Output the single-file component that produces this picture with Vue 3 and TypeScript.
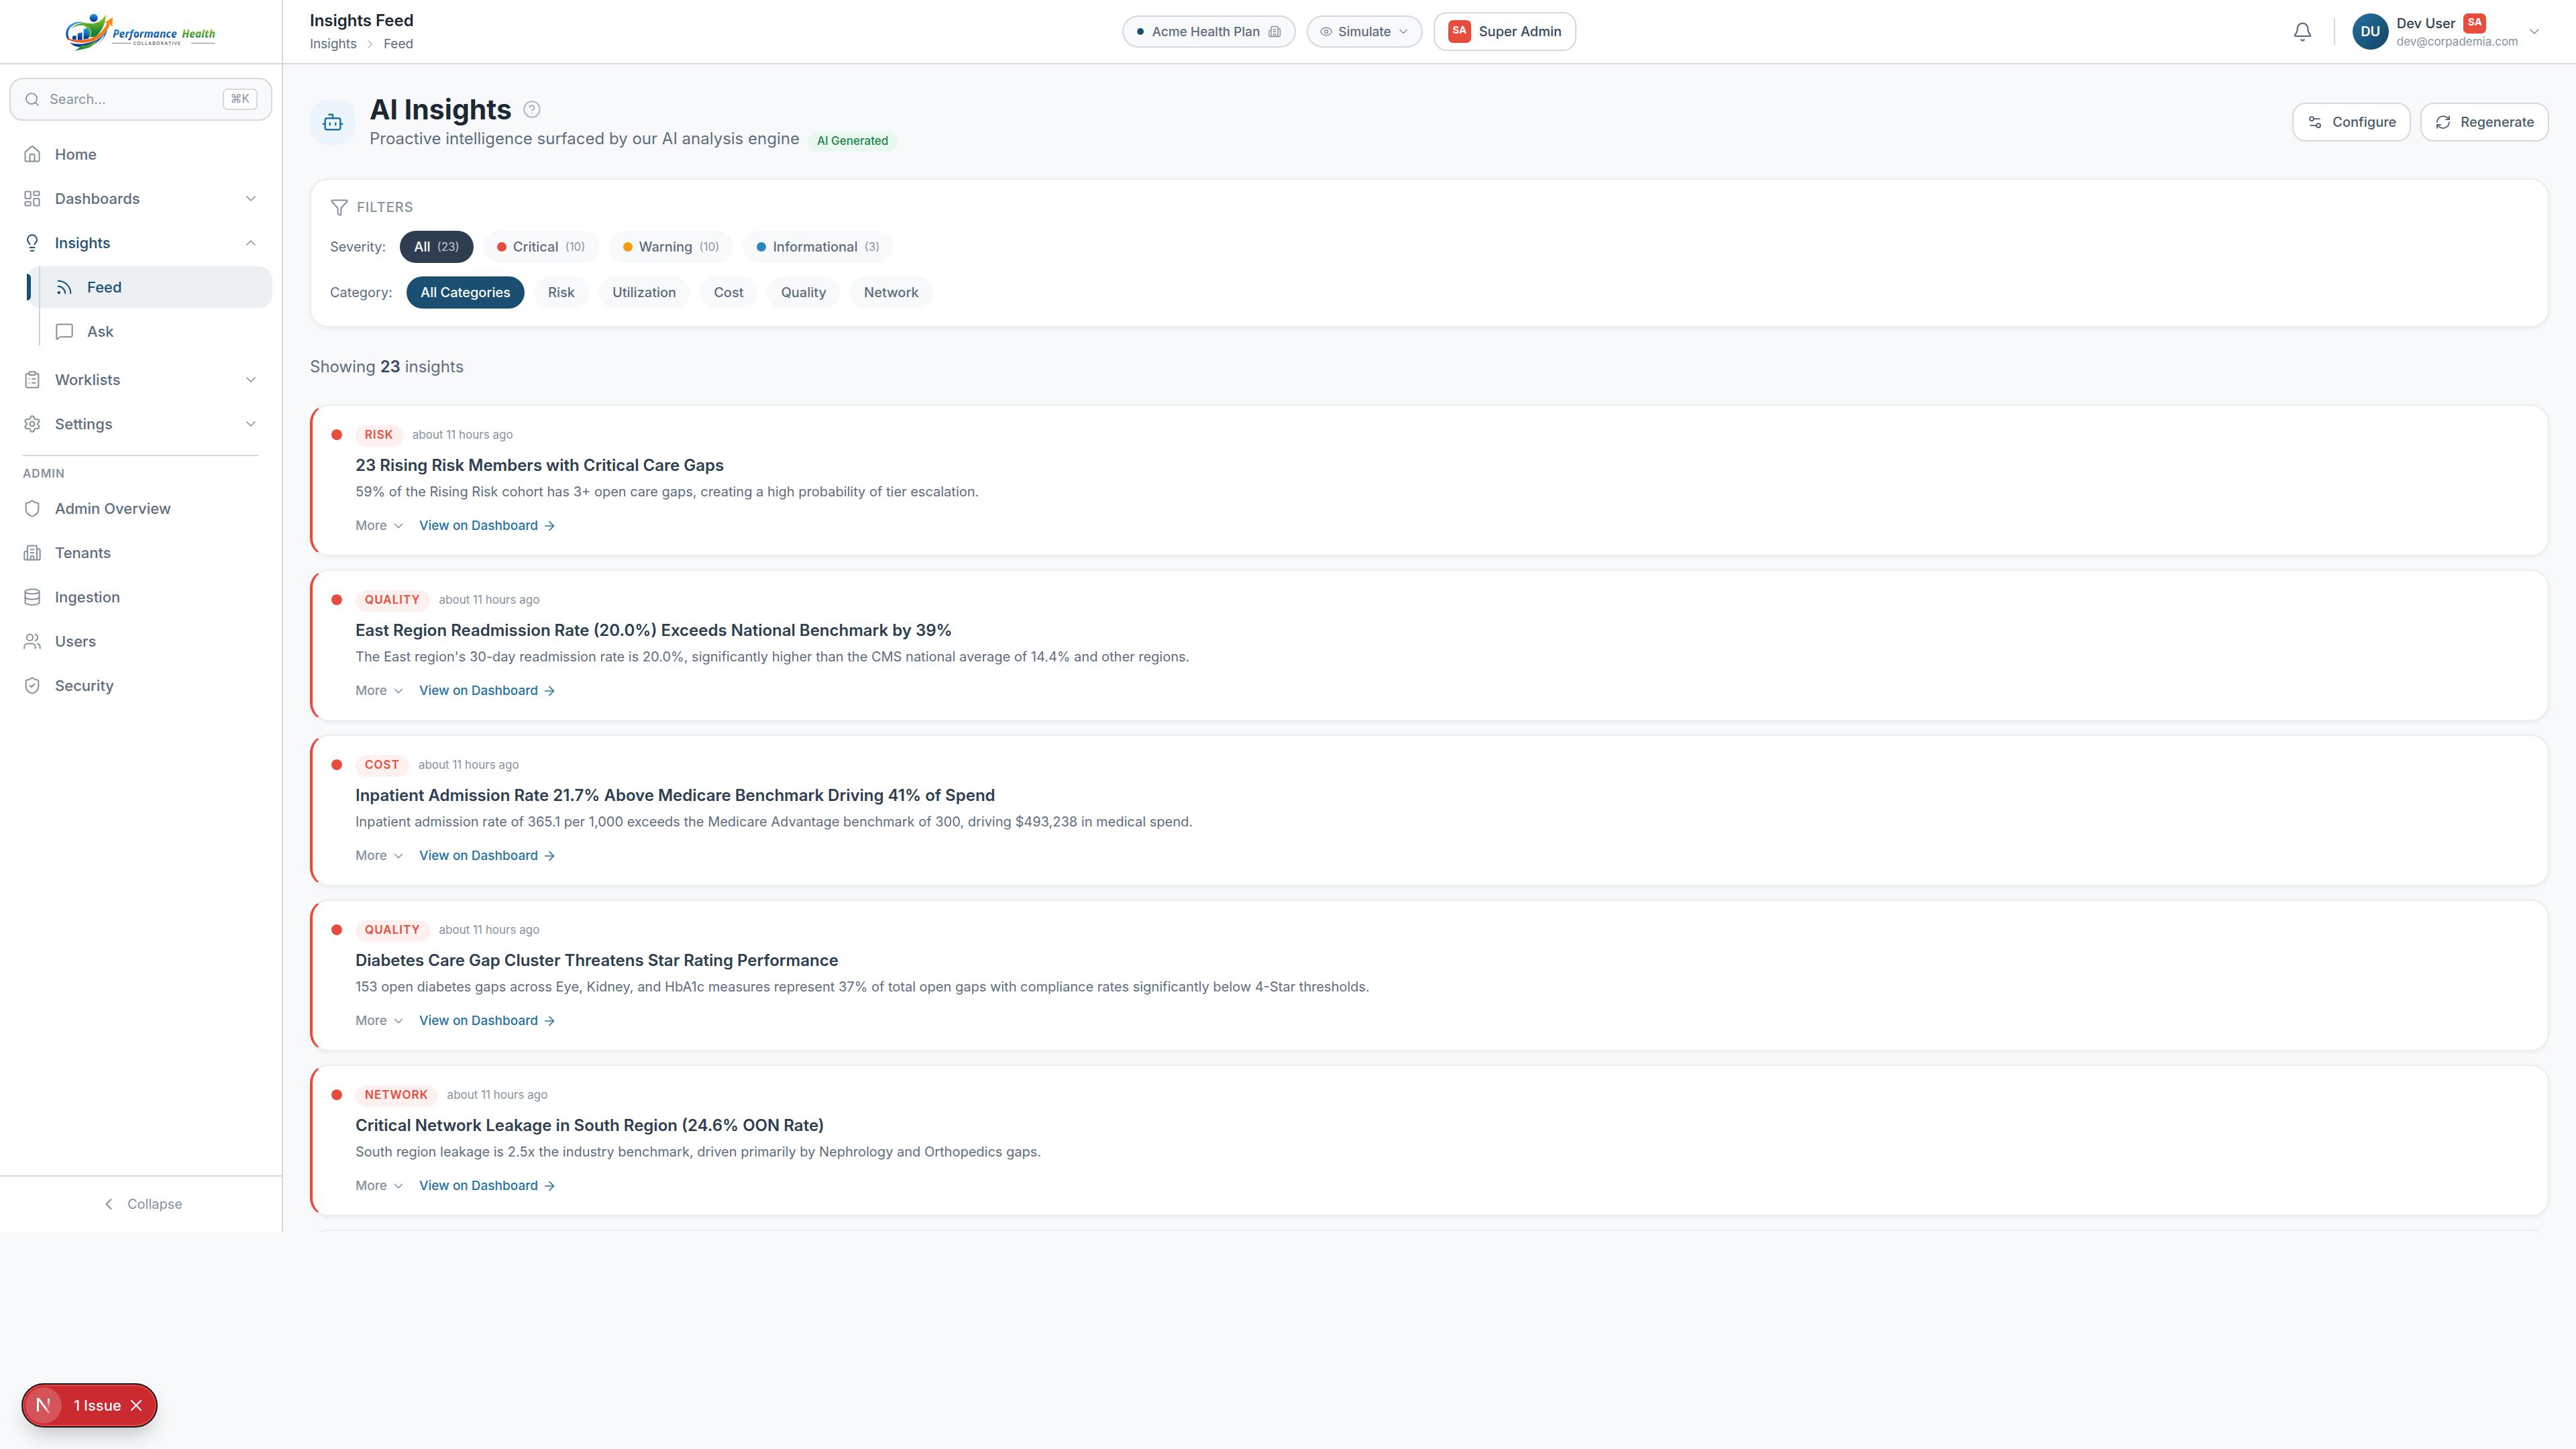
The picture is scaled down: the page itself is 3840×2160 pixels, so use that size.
<script setup lang="ts">
import { ref } from 'vue'

interface NavItem {
  label: string
  icon: string
  expandable?: boolean
  open?: boolean
  children?: { label: string; icon: string; active?: boolean }[]
}

interface Insight {
  category: string
  title: string
  summary: string
}

// Stroke icons on a 24-unit grid
const icons: Record<string, string> = {
  search: '<circle cx="11" cy="11" r="8"/><path d="m21 21-4.3-4.3"/>',
  home: '<path d="M15 21v-8a1 1 0 0 0-1-1h-4a1 1 0 0 0-1 1v8"/><path d="M3 10a2 2 0 0 1 .709-1.528l7-5.999a2 2 0 0 1 2.582 0l7 5.999A2 2 0 0 1 21 10v9a2 2 0 0 1-2 2H5a2 2 0 0 1-2-2z"/>',
  dashboard: '<rect width="7" height="9" x="3" y="3" rx="1"/><rect width="7" height="5" x="14" y="3" rx="1"/><rect width="7" height="9" x="14" y="12" rx="1"/><rect width="7" height="5" x="3" y="16" rx="1"/>',
  bulb: '<path d="M15 14c.2-1 .7-1.7 1.5-2.5 1-.9 1.5-2.2 1.5-3.5A6 6 0 0 0 6 8c0 1 .2 2.2 1.5 3.5.7.7 1.3 1.5 1.5 2.5"/><path d="M9 18h6"/><path d="M10 22h4"/>',
  rss: '<path d="M4 11a9 9 0 0 1 9 9"/><path d="M4 4a16 16 0 0 1 16 16"/><circle cx="5" cy="19" r="1"/>',
  message: '<path d="M22 17a2 2 0 0 1-2 2H6.828a2 2 0 0 0-1.414.586l-2.202 2.202A.71.71 0 0 1 2 21.286V5a2 2 0 0 1 2-2h16a2 2 0 0 1 2 2z"/>',
  clipboard: '<rect width="8" height="4" x="8" y="2" rx="1"/><path d="M16 4h2a2 2 0 0 1 2 2v14a2 2 0 0 1-2 2H6a2 2 0 0 1-2-2V6a2 2 0 0 1 2-2h2"/><path d="M12 11h4"/><path d="M12 16h4"/><path d="M8 11h.01"/><path d="M8 16h.01"/>',
  settings: '<path d="M9.671 4.136a2.34 2.34 0 0 1 4.659 0 2.34 2.34 0 0 0 3.319 1.915 2.34 2.34 0 0 1 2.33 4.033 2.34 2.34 0 0 0 0 3.831 2.34 2.34 0 0 1-2.33 4.033 2.34 2.34 0 0 0-3.319 1.915 2.34 2.34 0 0 1-4.659 0 2.34 2.34 0 0 0-3.32-1.915 2.34 2.34 0 0 1-2.33-4.033 2.34 2.34 0 0 0 0-3.831A2.34 2.34 0 0 1 6.35 6.051a2.34 2.34 0 0 0 3.319-1.915"/><circle cx="12" cy="12" r="3"/>',
  shield: '<path d="M20 13c0 5-3.5 7.5-7.66 8.95a1 1 0 0 1-.67-.01C7.5 20.5 4 18 4 13V6a1 1 0 0 1 1-1c2 0 4.5-1.2 6.24-2.72a1.17 1.17 0 0 1 1.52 0C14.51 3.81 17 5 19 5a1 1 0 0 1 1 1z"/>',
  shieldCheck: '<path d="M20 13c0 5-3.5 7.5-7.66 8.95a1 1 0 0 1-.67-.01C7.5 20.5 4 18 4 13V6a1 1 0 0 1 1-1c2 0 4.5-1.2 6.24-2.72a1.17 1.17 0 0 1 1.52 0C14.51 3.81 17 5 19 5a1 1 0 0 1 1 1z"/><path d="m9 12 2 2 4-4"/>',
  building: '<path d="M10 12h4"/><path d="M10 8h4"/><path d="M14 21v-3a2 2 0 0 0-4 0v3"/><path d="M6 10H4a2 2 0 0 0-2 2v7a2 2 0 0 0 2 2h16a2 2 0 0 0 2-2V9a2 2 0 0 0-2-2h-2"/><path d="M6 21V5a2 2 0 0 1 2-2h8a2 2 0 0 1 2 2v16"/>',
  database: '<ellipse cx="12" cy="5" rx="9" ry="3"/><path d="M3 5v14a9 3 0 0 0 18 0V5"/><path d="M3 12a9 3 0 0 0 18 0"/>',
  users: '<path d="M16 21v-2a4 4 0 0 0-4-4H6a4 4 0 0 0-4 4v2"/><circle cx="9" cy="7" r="4"/><path d="M22 21v-2a4 4 0 0 0-3-3.87"/><path d="M16 3.13a4 4 0 0 1 0 7.75"/>',
  down: '<path d="m6 9 6 6 6-6"/>',
  up: '<path d="m18 15-6-6-6 6"/>',
  left: '<path d="m15 18-6-6 6-6"/>',
  right: '<path d="m9 18 6-6-6-6"/>',
  arrow: '<path d="M5 12h14"/><path d="m12 5 7 7-7 7"/>',
  eye: '<path d="M2.062 12.348a1 1 0 0 1 0-.696 10.75 10.75 0 0 1 19.876 0 1 1 0 0 1 0 .696 10.75 10.75 0 0 1-19.876 0"/><circle cx="12" cy="12" r="3"/>',
  bell: '<path d="M10.268 21a2 2 0 0 0 3.464 0"/><path d="M3.262 15.326A1 1 0 0 0 4 17h16a1 1 0 0 0 .74-1.673C19.41 13.956 18 12.499 18 8A6 6 0 0 0 6 8c0 4.499-1.411 5.956-2.738 7.326"/>',
  bot: '<path d="M12 8V4H8"/><rect width="16" height="12" x="4" y="8" rx="2"/><path d="M2 14h2"/><path d="M20 14h2"/><path d="M15 13v2"/><path d="M9 13v2"/>',
  help: '<circle cx="12" cy="12" r="10"/><path d="M9.09 9a3 3 0 0 1 5.83 1c0 2-3 3-3 3"/><path d="M12 17h.01"/>',
  sliders: '<path d="M14 17H5"/><path d="M19 7h-9"/><circle cx="17" cy="17" r="3"/><circle cx="7" cy="7" r="3"/>',
  refresh: '<path d="M3 12a9 9 0 0 1 9-9 9.75 9.75 0 0 1 6.74 2.74L21 8"/><path d="M21 3v5h-5"/><path d="M21 12a9 9 0 0 1-9 9 9.75 9.75 0 0 1-6.74-2.74L3 16"/><path d="M8 16H3v5"/>',
  filter: '<path d="M10 20a1 1 0 0 0 .553.895l2 1A1 1 0 0 0 14 21v-7a2 2 0 0 1 .517-1.341L21.74 4.67A1 1 0 0 0 21 3H3a1 1 0 0 0-.742 1.67l7.225 7.989A2 2 0 0 1 10 14z"/>',
  close: '<path d="M18 6 6 18"/><path d="m6 6 12 12"/>',
}

const nav: NavItem[] = [
  { label: 'Home', icon: 'home' },
  { label: 'Dashboards', icon: 'dashboard', expandable: true },
  {
    label: 'Insights',
    icon: 'bulb',
    expandable: true,
    open: true,
    children: [
      { label: 'Feed', icon: 'rss', active: true },
      { label: 'Ask', icon: 'message' },
    ],
  },
  { label: 'Worklists', icon: 'clipboard', expandable: true },
  { label: 'Settings', icon: 'settings', expandable: true },
]

const adminNav: NavItem[] = [
  { label: 'Admin Overview', icon: 'shield' },
  { label: 'Tenants', icon: 'building' },
  { label: 'Ingestion', icon: 'database' },
  { label: 'Users', icon: 'users' },
  { label: 'Security', icon: 'shieldCheck' },
]

const severities = [
  { label: 'All', count: 23, tone: '' },
  { label: 'Critical', count: 10, tone: 'critical' },
  { label: 'Warning', count: 10, tone: 'warning' },
  { label: 'Informational', count: 3, tone: 'info' },
]
const categories = ['All Categories', 'Risk', 'Utilization', 'Cost', 'Quality', 'Network']

const severity = ref('All')
const category = ref('All Categories')
const query = ref('')
const issueOpen = ref(true)

const insights: Insight[] = [
  {
    category: 'RISK',
    title: '23 Rising Risk Members with Critical Care Gaps',
    summary: '59% of the Rising Risk cohort has 3+ open care gaps, creating a high probability of tier escalation.',
  },
  {
    category: 'QUALITY',
    title: 'East Region Readmission Rate (20.0%) Exceeds National Benchmark by 39%',
    summary: "The East region's 30-day readmission rate is 20.0%, significantly higher than the CMS national average of 14.4% and other regions.",
  },
  {
    category: 'COST',
    title: 'Inpatient Admission Rate 21.7% Above Medicare Benchmark Driving 41% of Spend',
    summary: 'Inpatient admission rate of 365.1 per 1,000 exceeds the Medicare Advantage benchmark of 300, driving $493,238 in medical spend.',
  },
  {
    category: 'QUALITY',
    title: 'Diabetes Care Gap Cluster Threatens Star Rating Performance',
    summary: '153 open diabetes gaps across Eye, Kidney, and HbA1c measures represent 37% of total open gaps with compliance rates significantly below 4-Star thresholds.',
  },
  {
    category: 'NETWORK',
    title: 'Critical Network Leakage in South Region (24.6% OON Rate)',
    summary: 'South region leakage is 2.5x the industry benchmark, driven primarily by Nephrology and Orthopedics gaps.',
  },
]
</script>

<template>
  <div class="shell">
    <aside class="sidebar">
      <div class="brand">
        <svg class="logo" viewBox="0 0 780 225" role="img" aria-label="Performance Health Collaborative">
          <defs>
            <linearGradient id="g-blue" x1="0" y1="0" x2="0" y2="1">
              <stop offset="0.2" stop-color="#1b8fdc" />
              <stop offset="0.8" stop-color="#0a3f94" />
            </linearGradient>
            <linearGradient id="g-green" x1="0" y1="0" x2="0" y2="1">
              <stop offset="0.2" stop-color="#84c225" />
              <stop offset="0.8" stop-color="#17803a" />
            </linearGradient>
            <linearGradient id="g-orange" x1="0" y1="0" x2="1" y2="0">
              <stop offset="0" stop-color="#f04e16" />
              <stop offset="1" stop-color="#fb8c1c" />
            </linearGradient>
          </defs>
          <path fill="url(#g-blue)" d="M140 70C100 60 60 78 55 116c-1 12 3 24 9 32l12 3c-10-12-14-24-11-38 5-26 34-43 75-43z" />
          <path fill="url(#g-green)" d="M80 98c20-22 46-30 74-24 30 6 58-6 80-38-2 30-10 56-28 78l-18 22h-26c14-24 2-48-28-52-20-3-38 3-54 14z" />
          <path fill="url(#g-green)" d="M130 82c30 2 44 28 30 54l-10 8c6-24 4-50-20-62z" />
          <circle cx="179" cy="50" r="18" fill="url(#g-blue)" />
          <path fill="url(#g-blue)" d="M84 131l17-3v21l-17-3zM107 119l21-4v34h-21zM134 100l22-4v46l-22 5z" />
          <path fill="url(#g-blue)" d="M72 160c16 20 50 26 86 16l-6 4c44-2 84-38 90-86-18 38-52 64-100 70-26 4-52 4-70-4z" />
          <path fill="#fff" d="M136 186c34-6 68-28 90-62l-4 14c-20 30-50 48-86 48z" />
          <path fill="url(#g-green)" d="M94 199c14-12 26-20 30-26 24 2 50-8 72-24-14 22-30 32-52 38-18 4-34 6-50 12z" />
          <path fill="url(#g-orange)" d="M55 137c34 18 90 18 130-4 26-14 44-36 54-60l-11-1 36-25-2 42-10-10c-12 32-34 56-66 70-46 20-108 14-131-12z" />
          <text x="264" y="139" class="logo-name" fill="url(#g-blue)">Performance</text>
          <text x="574" y="139" class="logo-name" fill="url(#g-green)">Health</text>
          <path stroke="#7d858d" stroke-width="3" d="M260 163h86M614 163h108" />
          <text x="356" y="171" class="logo-sub">COLLABORATIVE</text>
        </svg>
      </div>

      <div class="nav-area">
        <label class="search">
          <svg class="icon" viewBox="0 0 24 24" v-html="icons.search" />
          <input v-model="query" type="text" placeholder="Search..." aria-label="Search" />
          <kbd>⌘K</kbd>
        </label>

        <nav class="nav" aria-label="Main">
          <template v-for="item in nav" :key="item.label">
            <a href="#" class="nav-item" :class="{ current: item.open }">
              <svg class="icon nav-icon" viewBox="0 0 24 24" v-html="icons[item.icon]" />
              <span>{{ item.label }}</span>
              <svg v-if="item.expandable" class="icon chevron" viewBox="0 0 24 24" v-html="icons[item.open ? 'up' : 'down']" />
            </a>
            <div v-if="item.children" class="subnav">
              <a v-for="child in item.children" :key="child.label" href="#" class="nav-item sub" :class="{ active: child.active }">
                <svg class="icon nav-icon" viewBox="0 0 24 24" v-html="icons[child.icon]" />
                <span>{{ child.label }}</span>
              </a>
            </div>
          </template>
        </nav>

        <hr class="rule" />
        <h2 class="nav-heading">ADMIN</h2>
        <nav class="nav" aria-label="Admin">
          <a v-for="item in adminNav" :key="item.label" href="#" class="nav-item">
            <svg class="icon nav-icon" viewBox="0 0 24 24" v-html="icons[item.icon]" />
            <span>{{ item.label }}</span>
          </a>
        </nav>
      </div>

      <div class="side-foot">
        <button type="button" class="collapse">
          <svg class="icon" viewBox="0 0 24 24" v-html="icons.left" />
          Collapse
        </button>
      </div>
    </aside>

    <div class="content">
      <header class="topbar">
        <div class="crumb-block">
          <p class="page-name">Insights Feed</p>
          <nav class="crumbs" aria-label="Breadcrumb">
            <a href="#">Insights</a>
            <svg class="icon" viewBox="0 0 24 24" v-html="icons.right" />
            <a href="#">Feed</a>
          </nav>
        </div>

        <div class="context">
          <button type="button" class="pill tenant">
            <span class="dot" />
            Acme Health Plan
            <svg class="icon" viewBox="0 0 24 24" v-html="icons.building" />
          </button>
          <button type="button" class="pill simulate">
            <svg class="icon" viewBox="0 0 24 24" v-html="icons.eye" />
            Simulate
            <svg class="icon" viewBox="0 0 24 24" v-html="icons.down" />
          </button>
          <button type="button" class="role">
            <span class="role-badge">SA</span>
            Super Admin
          </button>
        </div>

        <div class="account">
          <button type="button" class="bell" aria-label="Notifications">
            <svg class="icon" viewBox="0 0 24 24" v-html="icons.bell" />
          </button>
          <span class="divider" />
          <button type="button" class="user">
            <span class="avatar">DU</span>
            <span class="who">
              <span class="who-name">Dev User <span class="role-badge short">SA</span></span>
              <span class="who-mail">dev@corpademia.com</span>
            </span>
            <svg class="icon" viewBox="0 0 24 24" v-html="icons.down" />
          </button>
        </div>
      </header>

      <main class="main">
        <section class="page-head">
          <span class="page-icon"><svg class="icon" viewBox="0 0 24 24" v-html="icons.bot" /></span>
          <div class="page-text">
            <div class="title-row">
              <h1>AI Insights</h1>
              <button type="button" class="help" aria-label="Help">
                <svg class="icon" viewBox="0 0 24 24" v-html="icons.help" />
              </button>
            </div>
            <div class="sub-row">
              <p>Proactive intelligence surfaced by our AI analysis engine</p>
              <span class="ai-badge">AI Generated</span>
            </div>
          </div>
          <div class="head-actions">
            <button type="button" class="action">
              <svg class="icon" viewBox="0 0 24 24" v-html="icons.sliders" />
              Configure
            </button>
            <button type="button" class="action">
              <svg class="icon" viewBox="0 0 24 24" v-html="icons.refresh" />
              Regenerate
            </button>
          </div>
        </section>

        <section class="filters">
          <h2 class="filters-title">
            <svg class="icon" viewBox="0 0 24 24" v-html="icons.filter" />
            FILTERS
          </h2>
          <div class="filter-row" role="group" aria-labelledby="sev-label">
            <span id="sev-label" class="filter-label">Severity:</span>
            <button
              v-for="s in severities"
              :key="s.label"
              type="button"
              class="chip"
              :class="{ dark: severity === s.label }"
              @click="severity = s.label"
            >
              <span v-if="s.tone" class="chip-dot" :class="s.tone" />
              {{ s.label }}
              <span class="count">({{ s.count }})</span>
            </button>
          </div>
          <div class="filter-row" role="group" aria-labelledby="cat-label">
            <span id="cat-label" class="filter-label">Category:</span>
            <button
              v-for="c in categories"
              :key="c"
              type="button"
              class="chip"
              :class="{ navy: category === c }"
              @click="category = c"
            >
              {{ c }}
            </button>
          </div>
        </section>

        <p class="showing">Showing <strong>23</strong> insights</p>

        <div class="list">
          <article v-for="i in insights" :key="i.title" class="card">
            <span class="sev-dot" />
            <div class="card-body">
              <div class="meta">
                <span class="tag">{{ i.category }}</span>
                <time>about 11 hours ago</time>
              </div>
              <h3>{{ i.title }}</h3>
              <p>{{ i.summary }}</p>
              <div class="links">
                <button type="button" class="more">
                  More
                  <svg class="icon" viewBox="0 0 24 24" v-html="icons.down" />
                </button>
                <a href="#" class="view">
                  View on Dashboard
                  <svg class="icon" viewBox="0 0 24 24" v-html="icons.arrow" />
                </a>
              </div>
            </div>
          </article>
          <article class="card" aria-hidden="true" />
        </div>
      </main>
    </div>
  </div>

  <div v-if="issueOpen" class="issue">
    <span class="issue-mark">
      <svg viewBox="0 0 54 54" aria-hidden="true">
        <defs>
          <linearGradient id="n-diag" x1="28" y1="30" x2="37" y2="41" gradientUnits="userSpaceOnUse">
            <stop stop-color="#fff" />
            <stop offset="1" stop-color="#fff" stop-opacity="0" />
          </linearGradient>
          <linearGradient id="n-stem" x1="0" y1="17" x2="0" y2="31" gradientUnits="userSpaceOnUse">
            <stop stop-color="#fff" />
            <stop offset="1" stop-color="#fff" stop-opacity="0" />
          </linearGradient>
        </defs>
        <path d="M18.500 36V17" stroke="#fff" stroke-width="3" />
        <path d="M17 16h3.500L37 38l-2.500 2L19 19z" fill="url(#n-diag)" />
        <path d="M33 17h3v14h-3z" fill="url(#n-stem)" />
      </svg>
    </span>
    <button type="button" class="issue-text">1 Issue</button>
    <button type="button" class="issue-close" aria-label="Dismiss" @click="issueOpen = false">
      <svg class="icon" viewBox="0 0 24 24" v-html="icons.close" />
    </button>
  </div>
</template>

<style>
body {
  background: #f8f9fb;
}
</style>

<style scoped>
.shell,
.issue {
  font-family: Inter, 'Liberation Sans', sans-serif;
  font-size: 20px;
}
.shell {
  display: flex;
  height: 85vh;
  overflow: hidden;
  color: #5d6d7e;
}
.shell *,
.issue,
.issue * {
  box-sizing: border-box;
}
button,
input,
kbd {
  font: inherit;
  color: inherit;
}
button {
  background: none;
  border: 0;
  margin: 0;
  padding: 0;
  display: flex;
  align-items: center;
  white-space: nowrap;
}
a {
  color: inherit;
  text-decoration: none;
}
h1,
h2,
h3,
p {
  margin: 0;
}
.icon {
  width: 24px;
  height: 24px;
  flex: none;
  fill: none;
  stroke: currentColor;
  stroke-width: 1.75;
  stroke-linecap: round;
  stroke-linejoin: round;
}

/* Sidebar */
.sidebar {
  width: 422px;
  flex: none;
  display: flex;
  flex-direction: column;
  background: #fff;
  border-right: 2px solid #d5d8dc;
}
.brand {
  height: 96px;
  flex: none;
  display: flex;
  align-items: center;
  justify-content: center;
  border-bottom: 2px solid #d5d8dc;
}
.logo {
  width: 260px;
  height: 75px;
}
.logo-name {
  font: italic 700 47px 'Open Sans', sans-serif;
}
.logo-sub {
  font: 600 22px 'Open Sans', sans-serif;
  letter-spacing: 3px;
  fill: #5b636b;
}
.nav-area {
  flex: 1;
  padding: 20px 14px;
}
.search {
  display: flex;
  align-items: center;
  gap: 14px;
  height: 64px;
  padding: 0 20px;
  margin-bottom: 19px;
  border: 2px solid #d5d8dc;
  border-radius: 20px;
  background: #f8f9fb;
  color: #85929e;
}
.search input {
  flex: 1;
  min-width: 0;
  padding: 0;
  border: 0;
  outline: 0;
  background: none;
}
.search input::placeholder {
  color: #85929e;
  opacity: 1;
}
.search kbd {
  height: 32px;
  padding: 0 10px;
  line-height: 26px;
  font-size: 17px;
  border: 2px solid #d5d8dc;
  border-radius: 7px;
  background: #fff;
}
.nav {
  display: flex;
  flex-direction: column;
  gap: 4px;
}
.nav-item {
  position: relative;
  display: flex;
  align-items: center;
  gap: 20px;
  height: 62px;
  padding: 0 20px;
  border-radius: 20px;
  font-size: 22px;
  font-weight: 500;
}
.nav-icon {
  width: 28px;
  height: 28px;
  color: #85929e;
}
.chevron {
  margin-left: auto;
  color: #85929e;
}
.nav-item.current,
.nav-item.current .nav-icon,
.nav-item.active,
.nav-item.active .nav-icon {
  color: #1b4f72;
}
.subnav {
  position: relative;
  display: flex;
  flex-direction: column;
  gap: 4px;
  margin: 0 0 6px 26px;
}
.subnav::after {
  content: '';
  position: absolute;
  left: 18px;
  top: 0;
  bottom: 10px;
  width: 2px;
  background: #cdd2d7;
}
.nav-item.sub {
  padding-left: 42px;
}
.nav-item.active {
  background: #ecf0f3;
}
.nav-item.active::before {
  content: '';
  position: absolute;
  left: 0;
  top: 11px;
  bottom: 11px;
  width: 6px;
  border-radius: 0 7px 7px 0;
  background: #1b4f72;
}
.rule {
  height: 2px;
  margin: 15px 20px 14px;
  border: 0;
  background: #d5d8dc;
}
.nav-heading {
  margin: 0 20px 9px;
  font-size: 17px;
  line-height: 24px;
  font-weight: 600;
  letter-spacing: 1px;
  color: #85929e;
}
.side-foot {
  height: 84px;
  flex: none;
  display: flex;
  align-items: center;
  justify-content: center;
  border-top: 2px solid #d5d8dc;
}
.collapse {
  gap: 14px;
  color: #85929e;
}
.collapse .icon {
  width: 28px;
  height: 28px;
}

/* Top bar */
.content {
  flex: 1;
  min-width: 0;
  display: flex;
  flex-direction: column;
}
.topbar {
  height: 96px;
  flex: none;
  display: flex;
  align-items: center;
  justify-content: space-between;
  padding: 0 40px;
  background: #fff;
  border-bottom: 2px solid #d5d8dc;
}
.page-name {
  font-size: 24px;
  line-height: 34px;
  font-weight: 600;
  color: #1c2833;
}
.crumbs {
  display: flex;
  align-items: center;
  gap: 10px;
  margin-top: 4px;
  font-size: 19px;
  line-height: 28px;
}
.crumbs .icon {
  width: 20px;
  height: 20px;
  color: #aeb6bf;
}
.context {
  display: flex;
  align-items: center;
  gap: 16px;
}
.pill {
  height: 48px;
  padding: 0 20px;
  gap: 12px;
  border: 2px solid #d5d8dc;
  border-radius: 24px;
  background: #f8f9fb;
  font-size: 19px;
  font-weight: 500;
}
.pill .icon {
  width: 20px;
  height: 20px;
  color: #85929e;
}
.dot {
  width: 10px;
  height: 10px;
  border-radius: 50%;
  background: #1b4f72;
}
.simulate {
  gap: 8px;
  padding: 0 17px;
}
.role {
  height: 58px;
  gap: 12px;
  padding: 0 20px;
  border: 2px solid #d5d8dc;
  border-radius: 20px;
  background: #fff;
  font-weight: 500;
  color: #34495e;
}
.role-badge {
  display: flex;
  justify-content: center;
  width: 34px;
  height: 34px;
  border-radius: 7px;
  background: #e74c3c;
  color: #fff;
  font-size: 15px;
  line-height: 29px;
  font-weight: 700;
}
.role-badge.short {
  height: 30px;
  line-height: 26px;
}
.account {
  display: flex;
  align-items: center;
}
.bell {
  width: 52px;
  height: 52px;
  justify-content: center;
}
.bell .icon {
  width: 31px;
  height: 31px;
}
.divider {
  width: 2px;
  height: 40px;
  margin: 0 26px 0 20px;
  background: #d5d8dc;
}
.user {
  gap: 12px;
  padding-right: 10px;
  text-align: left;
}
.avatar {
  display: flex;
  align-items: center;
  justify-content: center;
  width: 54px;
  height: 54px;
  border-radius: 50%;
  background: linear-gradient(135deg, #2471a3, #154360);
  color: #fff;
  font-weight: 600;
}
.who {
  display: flex;
  flex-direction: column;
}
.who-name {
  display: flex;
  align-items: center;
  gap: 12px;
  line-height: 30px;
  font-weight: 500;
  color: #2c3e50;
}
.who-mail {
  font-size: 17px;
  line-height: 24px;
  color: #85929e;
}
.user > .icon {
  color: #85929e;
}

/* Page heading */
.main {
  flex: 1;
  min-height: 0;
  overflow: hidden;
  padding: 42px 40px 0;
}
.page-head {
  display: flex;
  align-items: center;
  gap: 21px;
  margin-bottom: 40px;
}
.page-icon {
  display: flex;
  align-items: center;
  justify-content: center;
  width: 68px;
  height: 68px;
  border-radius: 27px;
  background: #ebf5fb;
  color: #2471a3;
}
.page-icon .icon {
  width: 34px;
  height: 34px;
}
.page-text {
  flex: 1;
}
.title-row {
  display: flex;
  align-items: center;
  gap: 16px;
}
h1 {
  font-size: 41px;
  line-height: 50px;
  font-weight: 700;
  color: #1c2833;
}
.help {
  color: #aeb6bf;
}
.help .icon {
  width: 28px;
  height: 28px;
}
.sub-row {
  display: flex;
  align-items: flex-end;
  gap: 12px;
  font-size: 24px;
  line-height: 38px;
}
.ai-badge {
  height: 30px;
  padding: 0 14px;
  border-radius: 14px;
  background: #e9f9f0;
  color: #1e8449;
  font-size: 17px;
  line-height: 28px;
  font-weight: 500;
}
.head-actions {
  display: flex;
  gap: 14px;
}
.action {
  height: 58px;
  gap: 14px;
  padding: 0 20px;
  border: 2px solid #d5d8dc;
  border-radius: 20px;
  background: #fff;
  font-weight: 500;
  color: #4a5b6c;
}

/* Filters */
.filters {
  display: flex;
  flex-direction: column;
  gap: 20px;
  padding: 26px 28px;
  border: 2px solid #ebedef;
  border-radius: 27px;
  background: #fff;
  box-shadow: 0 2px 6px rgba(0, 0, 0, 0.06);
}
.filters-title {
  display: flex;
  align-items: center;
  gap: 12px;
  font-size: 20px;
  line-height: 30px;
  font-weight: 500;
  letter-spacing: 1px;
  color: #85929e;
}
.filters-title .icon {
  width: 28px;
  height: 28px;
}
.filter-row {
  display: flex;
  align-items: center;
  gap: 14px;
}
.filter-label {
  margin-right: 7px;
}
.chip {
  height: 48px;
  gap: 10px;
  padding: 0 21px;
  border-radius: 24px;
  background: #f8f9fb;
  font-weight: 500;
}
.chip.dark {
  background: #2e3d4f;
  color: #fff;
}
.chip.navy {
  background: #1b4f72;
  color: #fff;
}
.count {
  font-size: 17px;
  font-weight: 400;
  opacity: 0.7;
}
.chip-dot {
  width: 14px;
  height: 14px;
  border-radius: 50%;
}
.critical {
  background: #e74c3c;
}
.warning {
  background: #f39c12;
}
.info {
  background: #2e86c1;
}

/* Feed */
.showing {
  margin: 41px 0 38px;
  font-size: 24px;
  line-height: 36px;
}
.showing strong {
  font-weight: 600;
  color: #34495e;
}
.list {
  display: flex;
  flex-direction: column;
  gap: 20px;
}
.card {
  display: flex;
  gap: 20px;
  min-height: 226px;
  padding: 29px 28px;
  border: 2px solid #ebedef;
  border-left: 4px solid #e74c3c;
  border-radius: 27px;
  background: #fff;
  box-shadow: 0 2px 6px rgba(0, 0, 0, 0.06);
}
.sev-dot {
  width: 16px;
  height: 16px;
  flex: none;
  margin-top: 6px;
  border-radius: 50%;
  background: #e74c3c;
}
.meta {
  display: flex;
  gap: 14px;
  font-size: 17px;
  line-height: 28px;
  color: #85929e;
}
.tag {
  height: 32px;
  padding: 0 14px;
  border-radius: 16px;
  background: #fdf0ef;
  color: #e74c3c;
  font-weight: 600;
  letter-spacing: 1px;
}
h3 {
  margin-top: 10px;
  font-size: 24px;
  line-height: 36px;
  font-weight: 600;
  color: #2c3e50;
}
.card-body p {
  margin-top: 4px;
  line-height: 34px;
}
.links {
  display: flex;
  gap: 20px;
  margin-top: 20px;
  font-size: 19px;
  line-height: 28px;
  font-weight: 500;
}
.links .icon {
  width: 22px;
  height: 22px;
}
.more {
  gap: 6px;
  color: #85929e;
}
.view {
  display: flex;
  align-items: center;
  gap: 6px;
  color: #2471a3;
}

/* Dev issue badge */
.issue {
  position: fixed;
  left: 32px;
  bottom: 32px;
  display: flex;
  align-items: center;
  height: 66px;
  padding: 0 16px 0 4px;
  border: 2px solid #171717;
  border-radius: 33px;
  background: #ca2a30;
  box-shadow:
    inset 0 0 0 2px #e5484d,
    0 16px 32px -8px rgba(0, 0, 0, 0.24);
  color: #fff;
}
.issue-mark {
  width: 54px;
  height: 54px;
  border-radius: 50%;
  background: rgba(255, 255, 255, 0.2);
}
.issue-mark svg {
  display: block;
}
.issue-text {
  margin: 0 8px 0 18px;
  font-size: 22px;
  font-weight: 500;
}
.issue-close .icon {
  width: 28px;
  height: 28px;
}
</style>
